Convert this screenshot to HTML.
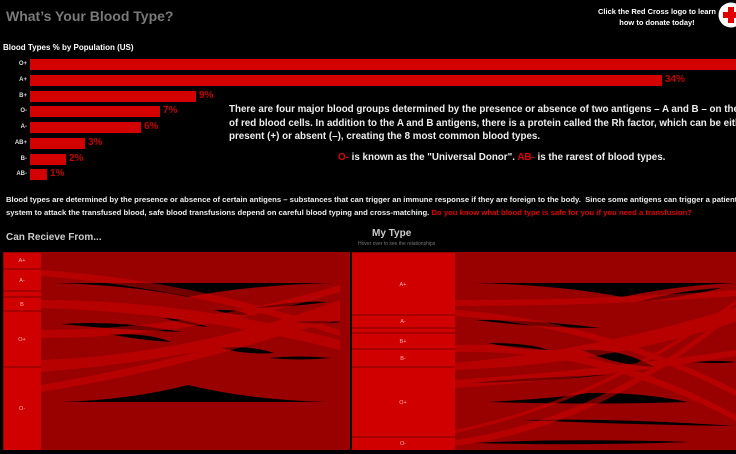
<!DOCTYPE html>
<html><head><meta charset="utf-8"><style>
*{margin:0;padding:0;box-sizing:border-box}
body{width:736px;height:454px;background:#000;overflow:hidden;position:relative;font-family:"Liberation Sans",sans-serif;color:#fff}
.a{position:absolute;white-space:nowrap}
.lbl{position:absolute;left:0;width:27px;text-align:right;font-size:6px;font-weight:bold;color:#ddd}
.bar{position:absolute;left:30px;height:11px;background:#d40000}
.pct{position:absolute;font-size:10px;font-weight:bold;color:#c40000}
.r{color:#e00000}
.clip{position:absolute;overflow:hidden;left:0;width:736px}
</style></head><body>
<div class="a" style="left:6px;top:8px;font-size:14px;font-weight:bold;color:#7a7a7a">What’s Your Blood Type?</div>
<div class="a" style="left:598px;top:6px;font-size:7.5px;font-weight:bold;text-align:center;line-height:11px">Click the Red Cross logo to learn<br>how to donate today!</div>
<svg class="a" style="left:718px;top:2px" width="26" height="26"><circle cx="13" cy="13" r="12.5" fill="#fff"/><path d="M10 5h6v5h5v6h-5v5h-6v-5h-5v-6h5z" fill="#e00000"/></svg>
<div class="a" style="left:3px;top:43px;font-size:8px;font-weight:bold">Blood Types % by Population (US)</div>

<div class="lbl" style="top:61px">O+</div><div class="bar" style="top:59px;width:706px"></div>
<div class="lbl" style="top:77px">A+</div><div class="bar" style="top:75px;width:632px"></div><div class="pct" style="left:665px;top:74px">34%</div>
<div class="lbl" style="top:93px">B+</div><div class="bar" style="top:91px;width:166px"></div><div class="pct" style="left:199px;top:90px">9%</div>
<div class="lbl" style="top:108px">O-</div><div class="bar" style="top:106px;width:130px"></div><div class="pct" style="left:163px;top:105px">7%</div>
<div class="lbl" style="top:124px">A-</div><div class="bar" style="top:122px;width:111px"></div><div class="pct" style="left:144px;top:121px">6%</div>
<div class="lbl" style="top:140px">AB+</div><div class="bar" style="top:138px;width:55px"></div><div class="pct" style="left:88px;top:137px">3%</div>
<div class="lbl" style="top:156px">B-</div><div class="bar" style="top:154px;width:36px"></div><div class="pct" style="left:69px;top:153px">2%</div>
<div class="lbl" style="top:171px">AB-</div><div class="bar" style="top:169px;width:17px"></div><div class="pct" style="left:50px;top:168px">1%</div>

<div class="clip" style="top:103px;height:42px"><div class="a" style="left:229px;top:0;font-size:9.8px;font-weight:bold;line-height:13.5px;color:#eee">There are four major blood groups determined by the presence or absence of two antigens – A and B – on the surface<br>of red blood cells. In addition to the A and B antigens, there is a protein called the Rh factor, which can be either<br>present (+) or absent (–), creating the 8 most common blood types.</div></div>
<div class="a" style="left:338px;top:152px;font-size:9.8px;font-weight:bold;color:#eee"><span class="r">O-</span> is known as the "Universal Donor". <span class="r">AB-</span> is the rarest of blood types.</div>

<div class="clip" style="top:193px;height:28px"><div class="a" style="left:6px;top:0;font-size:7.7px;font-weight:bold;line-height:13px;color:#eee">Blood types are determined by the presence or absence of certain antigens – substances that can trigger an immune response if they are foreign to the body.&nbsp; Since some antigens can trigger a patient's immune<br>system to attack the transfused blood, safe blood transfusions depend on careful blood typing and cross-matching. <span class="r">Do you know what blood type is safe for you if you need a transfusion?</span></div></div>

<div class="a" style="left:6px;top:232px;font-size:10px;font-weight:bold;color:#ccc">Can Recieve From...</div>
<div class="a" style="left:372px;top:228px;font-size:10px;font-weight:bold;color:#ccc">My Type</div>
<div class="a" style="left:358px;top:241px;font-size:5px;color:#777">Hover over to see the relationships</div>

<svg class="a" style="left:0;top:0" width="736" height="454">
<rect x="3" y="252" width="347" height="198" fill="#990000"/>
<rect x="352" y="252" width="384" height="198" fill="#990000"/>
<g fill="#000">
<path d="M54 283 L334 283 Q250 285 188 297 Q130 285 54 283Z"/>
<path d="M61 402 L328 402 Q250 400 188 385 Q130 400 61 402Z"/>
<path d="M61 324 Q120 320 181 332 Q120 330 61 324Z"/>
<path d="M108 334 Q150 333 171 342 Q140 340 108 334Z"/>
<path d="M214 310 Q240 309 248 315 Q230 315 214 310Z"/>
<path d="M254 308 Q300 300 328 302 Q290 307 254 308Z"/>
<path d="M164 318 Q190 320 208 327 Q185 325 164 318Z"/>
<path d="M221 348 Q250 345 274 353 Q245 355 221 348Z"/>
<path d="M268 358 Q300 355 331 358 Q300 361 268 358Z"/>
<path d="M294 322 Q320 320 341 322 Q320 325 294 322Z"/>
<path d="M475 283 L736 283 Q680 285 622 297 Q560 285 475 283Z"/>
<path d="M638 302 Q680 290 722 288 Q680 298 638 302Z"/>
<path d="M475 320 Q540 320 600 328 Q540 328 475 320Z"/>
<path d="M488 343 Q530 343 548 350 Q520 350 488 343Z"/>
<path d="M582 350 Q620 348 655 367 Q615 365 582 350Z"/>
<path d="M470 383 Q520 378 605 375 Q540 382 470 383Z"/>
<path d="M488 402 Q560 398 588 393 Q640 392 688 402 Q600 405 488 402Z"/>
<path d="M522 420 Q620 418 736 426 Q640 425 522 420Z"/>
<path d="M475 443 Q560 438 690 442 Q580 446 475 443Z"/>
<path d="M690 362 Q720 360 736 362 Q720 364 690 362Z"/>
</g>
<g fill="#d00000" opacity="0.55">
<path d="M41 360 Q190 355 340 300 L340 320 Q190 360 41 372Z"/>
<path d="M41 300 Q190 300 340 340 L340 350 Q190 312 41 308Z"/>
<path d="M41 270 Q190 280 340 330 L340 336 Q190 288 41 276Z"/>
<path d="M41 385 Q190 360 340 310 L340 316 Q190 368 41 392Z"/>
<path d="M41 330 Q190 330 340 285 L340 292 Q190 338 41 338Z"/>
<path d="M455 363 Q600 350 736 307 L736 322 Q600 365 455 370Z"/>
<path d="M455 440 Q600 420 736 308 L736 313 Q600 428 455 446Z"/>
<path d="M455 430 Q600 400 736 300 L736 304 Q600 404 455 433Z"/>
<path d="M455 310 Q600 320 736 390 L736 396 Q600 326 455 316Z"/>
<path d="M455 345 Q600 340 736 415 L736 421 Q600 348 455 352Z"/>
<path d="M455 300 Q600 300 736 290 L736 296 Q600 306 455 306Z"/>
<path d="M455 380 Q600 370 736 350 L736 356 Q600 378 455 388Z"/>
</g>
<rect x="4" y="253" width="37" height="197" fill="#d10000"/>
<rect x="352" y="253" width="103" height="197" fill="#d10000"/>
<g stroke="#7a0000" stroke-width="1">
<path d="M4 269H41M4 291H41M4 297H41M4 311H41M4 367H41"/>
<path d="M352 315H455M352 328H455M352 333H455M352 349H455M352 367H455M352 437H455"/>
</g>
<g fill="#ffb0b0" font-size="5.5" font-family="Liberation Sans" text-anchor="middle">
<text x="22" y="262">A+</text><text x="22" y="282">A-</text><text x="22" y="306">B</text><text x="22" y="341">O+</text><text x="22" y="410">O-</text>
<text x="403" y="286">A+</text><text x="403" y="323">A-</text><text x="403" y="343">B+</text><text x="403" y="360">B-</text><text x="403" y="404">O+</text><text x="403" y="445">O-</text>
</g>
</svg>
</body></html>
